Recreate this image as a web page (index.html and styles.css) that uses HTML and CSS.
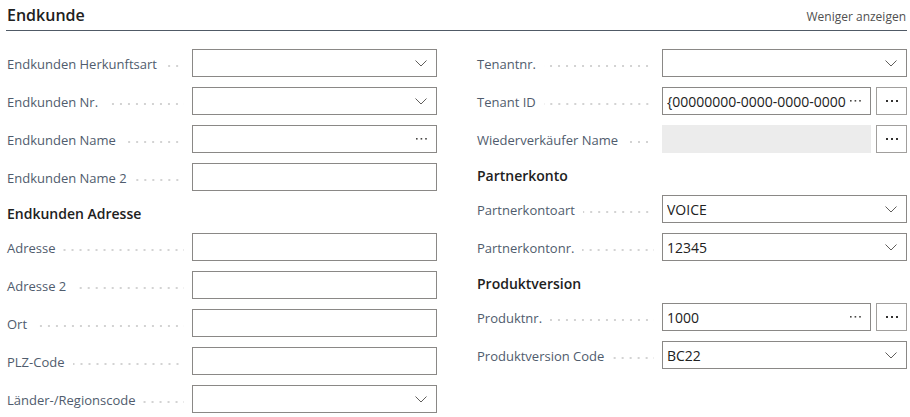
FILE: index.html
```html
<!DOCTYPE html>
<html lang="de">
<head>
    <meta charset="UTF-8">
    <meta name="viewport" content="width=device-width, initial-scale=1.0">
    <title>Endkunde</title>
    <link rel="stylesheet" href="styles.css">
</head>
<body>
    <div class="card">
        <div class="card-header">
            <h2>Endkunde</h2>
            <a href="#" class="less-link">Weniger anzeigen</a>
        </div>

        <div class="columns">
            <div class="column">
                <div class="field">
                    <label><span>Endkunden Herkunftsart</span><i class="leader"></i></label>
                    <div class="input"><span class="value"></span>
                        <svg class="chevron" width="12" height="7" viewBox="0 0 12 7"><polyline points="0.5,0.5 6,6 11.5,0.5" /></svg>
                    </div>
                </div>
                <div class="field">
                    <label><span>Endkunden Nr.</span><i class="leader"></i></label>
                    <div class="input"><span class="value"></span>
                        <svg class="chevron" width="12" height="7" viewBox="0 0 12 7"><polyline points="0.5,0.5 6,6 11.5,0.5" /></svg>
                    </div>
                </div>
                <div class="field">
                    <label><span>Endkunden Name</span><i class="leader"></i></label>
                    <div class="input"><span class="value"></span>
                        <svg class="dots" width="11" height="2" viewBox="0 0 11 2"><rect x="0" y="0" width="1.6" height="1.6" /><rect x="4.6" y="0" width="1.6" height="1.6" /><rect x="9.2" y="0" width="1.6" height="1.6" /></svg>
                    </div>
                </div>
                <div class="field">
                    <label><span>Endkunden Name 2</span><i class="leader"></i></label>
                    <div class="input"><span class="value"></span></div>
                </div>

                <h3 class="group-title">Endkunden Adresse</h3>

                <div class="field">
                    <label><span>Adresse</span><i class="leader"></i></label>
                    <div class="input"><span class="value"></span></div>
                </div>
                <div class="field">
                    <label><span>Adresse 2</span><i class="leader"></i></label>
                    <div class="input"><span class="value"></span></div>
                </div>
                <div class="field">
                    <label><span>Ort</span><i class="leader"></i></label>
                    <div class="input"><span class="value"></span></div>
                </div>
                <div class="field">
                    <label><span>PLZ-Code</span><i class="leader"></i></label>
                    <div class="input"><span class="value"></span></div>
                </div>
                <div class="field">
                    <label><span>Länder-/Regionscode</span><i class="leader"></i></label>
                    <div class="input"><span class="value"></span>
                        <svg class="chevron" width="12" height="7" viewBox="0 0 12 7"><polyline points="0.5,0.5 6,6 11.5,0.5" /></svg>
                    </div>
                </div>
            </div>

            <div class="column">
                <div class="field">
                    <label><span>Tenantnr.</span><i class="leader"></i></label>
                    <div class="input"><span class="value"></span>
                        <svg class="chevron" width="12" height="7" viewBox="0 0 12 7"><polyline points="0.5,0.5 6,6 11.5,0.5" /></svg>
                    </div>
                </div>
                <div class="field">
                    <label><span>Tenant ID</span><i class="leader"></i></label>
                    <div class="input-group">
                        <div class="input"><span class="value">{00000000-0000-0000-0000</span>
                            <svg class="dots" width="11" height="2" viewBox="0 0 11 2"><rect x="0" y="0" width="1.6" height="1.6" /><rect x="4.6" y="0" width="1.6" height="1.6" /><rect x="9.2" y="0" width="1.6" height="1.6" /></svg>
                        </div>
                        <button class="assist-btn"><svg width="12" height="2" viewBox="0 0 12 2"><rect x="0" y="0" width="2" height="2" /><rect x="5" y="0" width="2" height="2" /><rect x="10" y="0" width="2" height="2" /></svg></button>
                    </div>
                </div>
                <div class="field">
                    <label><span>Wiederverkäufer Name</span><i class="leader"></i></label>
                    <div class="input-group">
                        <div class="input disabled"><span class="value"></span></div>
                        <button class="assist-btn"><svg width="12" height="2" viewBox="0 0 12 2"><rect x="0" y="0" width="2" height="2" /><rect x="5" y="0" width="2" height="2" /><rect x="10" y="0" width="2" height="2" /></svg></button>
                    </div>
                </div>

                <h3 class="group-title">Partnerkonto</h3>

                <div class="field">
                    <label><span>Partnerkontoart</span><i class="leader"></i></label>
                    <div class="input"><span class="value">VOICE</span>
                        <svg class="chevron" width="12" height="7" viewBox="0 0 12 7"><polyline points="0.5,0.5 6,6 11.5,0.5" /></svg>
                    </div>
                </div>
                <div class="field">
                    <label><span>Partnerkontonr.</span><i class="leader"></i></label>
                    <div class="input"><span class="value">12345</span>
                        <svg class="chevron" width="12" height="7" viewBox="0 0 12 7"><polyline points="0.5,0.5 6,6 11.5,0.5" /></svg>
                    </div>
                </div>

                <h3 class="group-title">Produktversion</h3>

                <div class="field">
                    <label><span>Produktnr.</span><i class="leader"></i></label>
                    <div class="input-group">
                        <div class="input"><span class="value">1000</span>
                            <svg class="dots" width="11" height="2" viewBox="0 0 11 2"><rect x="0" y="0" width="1.6" height="1.6" /><rect x="4.6" y="0" width="1.6" height="1.6" /><rect x="9.2" y="0" width="1.6" height="1.6" /></svg>
                        </div>
                        <button class="assist-btn"><svg width="12" height="2" viewBox="0 0 12 2"><rect x="0" y="0" width="2" height="2" /><rect x="5" y="0" width="2" height="2" /><rect x="10" y="0" width="2" height="2" /></svg></button>
                    </div>
                </div>
                <div class="field">
                    <label><span>Produktversion Code</span><i class="leader"></i></label>
                    <div class="input"><span class="value">BC22</span>
                        <svg class="chevron" width="12" height="7" viewBox="0 0 12 7"><polyline points="0.5,0.5 6,6 11.5,0.5" /></svg>
                    </div>
                </div>
            </div>
        </div>
    </div>
</body>
</html>
```

FILE: styles.css
```css
body {
    margin: 0;
    background: #ffffff;
    font-family: "Open Sans", Arial, sans-serif;
    color: #212121;
}

.card {
    width: 900px;
    padding: 0 3px 0 7px;
}

.card-header {
    display: flex;
    justify-content: space-between;
    align-items: baseline;
    height: 31px;
    padding-top: 3px;
    box-sizing: border-box;
    border-bottom: 1px solid #505a66;
    margin-left: -1px;
}

.card-header h2 {
    margin: 0 0 0 1px;
    font-size: 16px;
    line-height: 24px;
    font-weight: 600;
    color: #212121;
}

.less-link {
    font-size: 12px;
    color: #505050;
    text-decoration: none;
    margin-right: 1px;
}

.columns {
    display: grid;
    grid-template-columns: 1fr 1fr;
    column-gap: 40px;
    margin-top: 18px;
}

.field {
    display: grid;
    grid-template-columns: 185px 1fr;
    height: 28px;
    margin-bottom: 10px;
}

.field label {
    display: flex;
    align-items: center;
    padding-top: 1px;
    font-size: 13px;
    color: #505c6d;
    white-space: nowrap;
}

.leader {
    flex: 1;
    height: 2px;
    margin: 4px 8px 0 8px;
    background-image: linear-gradient(to right, #d3d3d3 2px, transparent 2px);
    background-size: 8px 2px;
    background-position: right;
    background-repeat: repeat-x;
}

.input {
    display: flex;
    align-items: center;
    justify-content: space-between;
    height: 28px;
    box-sizing: border-box;
    border: 1px solid #8a8886;
    padding: 0 9px 0 4px;
    background: #ffffff;
    min-width: 0;
}

.input.disabled {
    background: #ececec;
    border-color: #ececec;
}

.value {
    font-size: 14px;
    color: #212121;
    white-space: nowrap;
    overflow: hidden;
}

.chevron polyline {
    fill: none;
    stroke: #605e5c;
    stroke-width: 1;
}

.dots rect {
    fill: #484644;
}

.input-group {
    display: flex;
    gap: 5px;
}

.input-group .input {
    flex: 1;
}

.assist-btn {
    width: 31px;
    height: 28px;
    padding: 0;
    border: 1px solid #a19f9d;
    background: #ffffff;
    display: flex;
    align-items: center;
    justify-content: center;
    cursor: pointer;
}

.assist-btn rect {
    fill: #323130;
}

.group-title {
    margin: 0 0 8px 0;
    padding-top: 2px;
    height: 22px;
    font-size: 14px;
    line-height: 22px;
    font-weight: 600;
    color: #212121;
}
```
